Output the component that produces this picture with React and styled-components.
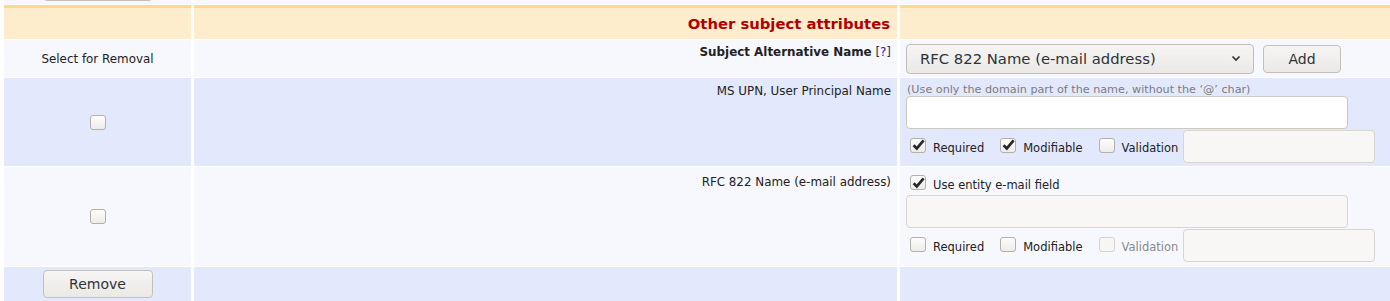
import React from "react";
import styled, { createGlobalStyle, css } from "styled-components";

const Global = createGlobalStyle`
  html, body { margin: 0; padding: 0; background: #fff; overflow: hidden; }
  body { font-family: "DejaVu Sans", Verdana, sans-serif; color: #222; }
`;

const tones = {
  light: "#f6f8fe",
  blue: "#e3e9fc",
  head: "#feedcc",
};

const Table = styled.div`
  display: grid;
  grid-template-columns: 187px 703px 1fr;
  grid-template-rows: 34px 34px 37px 88px 99px 40px;
  column-gap: 3px;
  row-gap: 1px;
  padding-left: 4px;
  margin-top: -30px;
  width: 1390px;
  box-sizing: border-box;
`;

const Cell = styled.div`
  box-sizing: border-box;
  background: ${(p) => tones[p.$tone]};
  font-size: 11.9px;
  line-height: 14px;
  display: flex;
  flex-direction: column;
  ${(p) =>
    p.$tone === "head" &&
    css`
      border-top: 3px solid #fed88f;
    `}
`;

const CenterCell = styled(Cell)`
  align-items: center;
  justify-content: center;
`;

const TopCenterCell = styled(Cell)`
  align-items: center;
  justify-content: flex-start;
  padding-top: 3px;
`;

const LabelCell = styled(Cell)`
  align-items: flex-end;
  padding: ${(p) => p.$pt || 6}px 6px 0 0;
  text-align: right;
`;

const HeadTitle = styled(Cell)`
  align-items: flex-end;
  justify-content: center;
  padding-right: 7px;
  font-size: 14.8px;
  line-height: 18px;
  font-weight: bold;
  color: #b00000;
`;

const FieldCell = styled(Cell)`
  padding: ${(p) => p.$pt || 0}px 0 0 6px;
  justify-content: ${(p) => (p.$center ? "center" : "flex-start")};
`;

const Bold = styled.span`
  font-weight: bold;
`;

const Help = styled.span`
  color: #333;
  a {
    color: #2323a8;
    text-decoration: none;
  }
`;

const InlineRow = styled.div`
  display: flex;
  align-items: center;
  gap: ${(p) => p.$gap || 0}px;
  height: ${(p) => (p.$h ? `${p.$h}px` : "auto")};
  padding-left: ${(p) => p.$pl || 0}px;
`;

const buttonLook = css`
  box-sizing: border-box;
  border: 1px solid #c4c0b9;
  border-radius: 4px;
  background: linear-gradient(#f6f5f4, #ebe9e6);
  color: #2e3436;
  font-family: "DejaVu Sans", Verdana, sans-serif;
`;

const Button = styled.button`
  ${buttonLook};
  width: ${(p) => p.$w}px;
  height: 28px;
  font-size: 14px;
  padding: 0;
  flex: none;
`;

const SelectBox = styled.div`
  ${buttonLook};
  width: 348px;
  height: 30px;
  display: flex;
  align-items: center;
  justify-content: space-between;
  padding: 0 12px 0 13px;
  font-size: 14.8px;
`;

const Hint = styled.div`
  font-size: 11.2px;
  line-height: 12px;
  color: #7c7c7c;
  padding-left: 1px;
`;

const TextInput = styled.div`
  box-sizing: border-box;
  width: ${(p) => p.$w}px;
  height: 33px;
  border: 1px solid ${(p) => (p.$disabled ? "#d9d5d0" : "#ccc8c2")};
  border-radius: 4px;
  background: ${(p) => (p.$disabled ? "#f8f7f5" : "#ffffff")};
  flex: none;
`;

const OptionRow = styled.div`
  display: flex;
  align-items: center;
  height: 33px;
  margin-top: 1px;
  padding-left: 4px;
`;

const Option = styled.label`
  display: flex;
  align-items: center;
  gap: 7px;
  margin-right: ${(p) => p.$mr ?? 16}px;
  font-size: 11.5px;
  color: ${(p) => (p.$muted ? "#8a8a8a" : "#222")};
  padding-top: 2px;
`;

const Box = styled.span`
  box-sizing: border-box;
  width: 16px;
  height: 15px;
  border: 1px solid ${(p) => (p.$disabled ? "#d6d3ce" : "#b4b0a9")};
  border-radius: 3px;
  background: ${(p) => (p.$disabled ? "#f7f6f4" : "linear-gradient(#fdfdfc, #eeece9)")};
  display: inline-flex;
  align-items: center;
  justify-content: center;
  flex: none;
  margin-bottom: ${(p) => (p.$raised ? 5 : 0)}px;
`;

const Check = ({ checked, disabled, raised }) => (
  <Box $disabled={disabled} $raised={raised}>
    {checked && (
      <svg width="13" height="12" viewBox="0 0 13 12">
        <path d="M1.6 6.2 L4.8 9.4 L11.6 1.4" fill="none" stroke="#26292b" strokeWidth="2.7" />
      </svg>
    )}
  </Box>
);

const Chevron = () => (
  <svg width="10" height="7" viewBox="0 0 10 7">
    <path d="M1.5 1.5 L5 5 L8.5 1.5" fill="none" stroke="#2e3436" strokeWidth="1.7" />
  </svg>
);

export default function App() {
  return (
    <>
      <Global />
      <Table>
        {/* partially visible row above: only the bottom edge of its button shows */}
        <TopCenterCell $tone="light">
          <Button $w={110} aria-label="Remove" />
        </TopCenterCell>
        <Cell $tone="light" />
        <Cell $tone="light" />

        {/* header */}
        <Cell $tone="head" />
        <HeadTitle $tone="head">Other subject attributes</HeadTitle>
        <Cell $tone="head" />

        {/* subject alt name selector */}
        <CenterCell $tone="light">Select for Removal</CenterCell>
        <LabelCell $tone="light" $pt={5}>
          <span>
            <Bold>Subject Alternative Name</Bold>{" "}
            <Help>
              [<a href="#">?</a>]
            </Help>
          </span>
        </LabelCell>
        <FieldCell $tone="light" $center>
          <InlineRow $gap={9}>
            <SelectBox>
              <span>RFC 822 Name (e-mail address)</span>
              <Chevron />
            </SelectBox>
            <Button $w={78}>Add</Button>
          </InlineRow>
        </FieldCell>

        {/* MS UPN */}
        <CenterCell $tone="blue">
          <Check />
        </CenterCell>
        <LabelCell $tone="blue" $pt={6}>MS UPN, User Principal Name</LabelCell>
        <FieldCell $tone="blue" $pt={6}>
          <Hint>(Use only the domain part of the name, without the ‘@’ char)</Hint>
          <TextInput $w={442} />
          <OptionRow>
            <Option>
              <Check checked raised />
              Required
            </Option>
            <Option>
              <Check checked raised />
              Modifiable
            </Option>
            <Option $mr={5}>
              <Check raised />
              Validation
            </Option>
            <TextInput $w={192} $disabled />
          </OptionRow>
        </FieldCell>

        {/* RFC 822 */}
        <CenterCell $tone="light">
          <Check />
        </CenterCell>
        <LabelCell $tone="light" $pt={8}>RFC 822 Name (e-mail address)</LabelCell>
        <FieldCell $tone="light" $pt={6}>
          <InlineRow $h={22} $pl={4}>
            <Option $mr={0}>
              <Check checked raised />
              Use entity e-mail field
            </Option>
          </InlineRow>
          <TextInput $w={442} $disabled />
          <OptionRow>
            <Option>
              <Check raised />
              Required
            </Option>
            <Option>
              <Check raised />
              Modifiable
            </Option>
            <Option $mr={5} $muted>
              <Check disabled raised />
              Validation
            </Option>
            <TextInput $w={192} $disabled />
          </OptionRow>
        </FieldCell>

        {/* remove row */}
        <TopCenterCell $tone="blue">
          <Button $w={110}>Remove</Button>
        </TopCenterCell>
        <Cell $tone="blue" />
        <Cell $tone="blue" />
      </Table>
    </>
  );
}
